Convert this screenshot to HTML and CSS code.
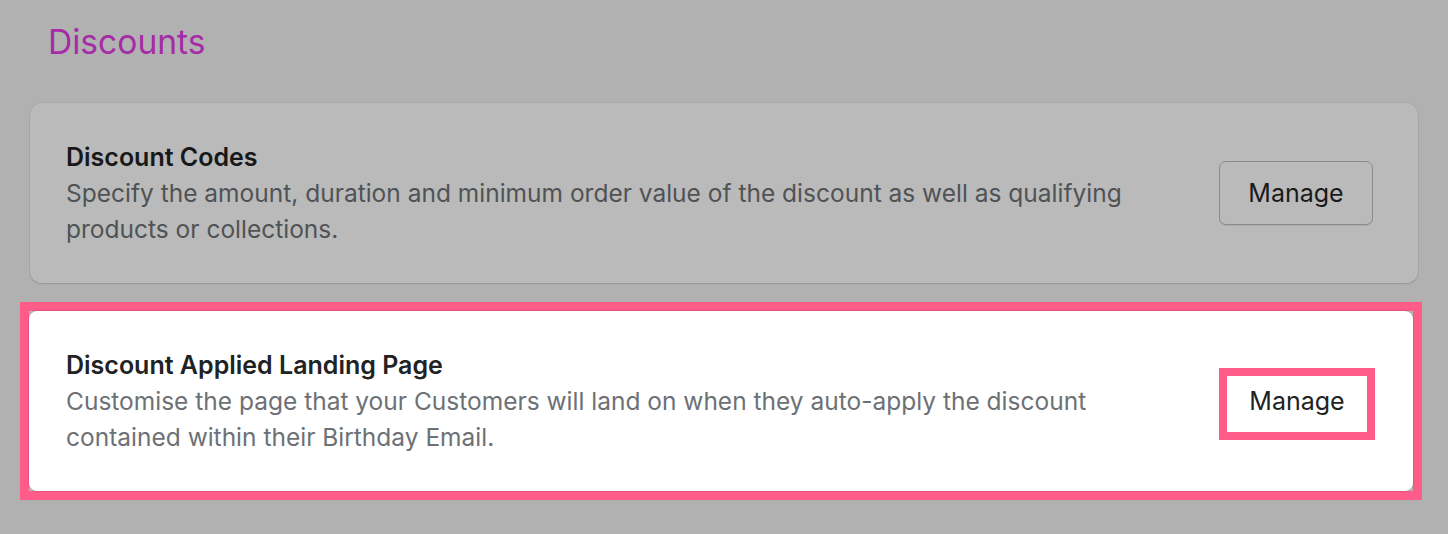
FILE: index.html
```html
<!DOCTYPE html>
<html lang="en">
<head>
<meta charset="utf-8">
<title>Discounts</title>
<link rel="stylesheet" href="styles.css">
</head>
<body>
<main class="page">
  <h1 class="page-title">Discounts</h1>
  <div class="cards">
    <section class="card card-dim">
      <div class="card-text">
        <h2 class="card-title">Discount Codes</h2>
        <p class="card-desc">Specify the amount, duration and minimum order value of the discount as well as qualifying products or collections.</p>
      </div>
      <button class="btn btn-dim" type="button">Manage</button>
    </section>
    <div class="highlight">
      <section class="card card-lit">
        <div class="card-text">
          <h2 class="card-title">Discount Applied Landing Page</h2>
          <p class="card-desc">Customise the page that your Customers will land on when they auto-apply the discount contained within their Birthday Email.</p>
        </div>
        <div class="btn-wrap">
          <button class="btn btn-lit" type="button">Manage</button>
        </div>
      </section>
    </div>
  </div>
</main>
</body>
</html>
```

FILE: styles.css
```css
* { box-sizing: border-box; }

html, body {
  margin: 0;
  padding: 0;
  background: #b1b1b1;
  font-family: Inter, "Noto Sans", "Liberation Sans", sans-serif;
}

body {
  min-height: 534px;
}

.page {
  padding: 0 30px 35px 30px;
  min-height: 534px;
}

.page-title {
  margin: 0;
  padding: 20px 0 0 18px;
  height: 103px;
  font-size: 33.6px;
  line-height: 44px;
  font-weight: 400;
  color: #a52ba7;
}

.cards {
  display: flex;
  flex-direction: column;
  gap: 28px;
}

.card {
  display: flex;
  align-items: center;
  justify-content: space-between;
  border-radius: 12px;
  padding: 36px 45px 36px 36px;
  min-height: 179px;
}

.card-dim {
  background: #bababa;
  box-shadow: 0 1px 2px rgba(0, 0, 0, 0.12), 0 0 0 1px rgba(0, 0, 0, 0.03);
}

.highlight {
  border: 9px solid #ff5c8a;
  margin: -9px -4px 0 -10px;
  background: #b9b9b9;
}

.card-lit {
  background: #ffffff;
  border-radius: 8px;
  min-height: 180px;
  padding-left: 37px;
  padding-right: 39px;
  box-shadow: 0 0 2px rgba(0, 0, 0, 0.35);
}

.card-text {
  max-width: 1080px;
}

.card-title {
  margin: 0;
  font-size: 25px;
  line-height: 36px;
  font-weight: 600;
}

.card-desc {
  margin: 0;
  font-size: 24.5px;
  line-height: 36px;
  font-weight: 400;
}

.card-dim .card-title { color: #171819; }
.card-dim .card-desc { color: #505355; }
.card-lit .card-title { color: #202223; }
.card-lit .card-desc { color: #6d7175; }

.btn {
  flex: none;
  width: 154px;
  height: 64px;
  border-radius: 7px;
  font-family: inherit;
  font-size: 25px;
  font-weight: 400;
  color: #1a1a1a;
  cursor: pointer;
}

.btn-dim {
  background: #bababa;
  border: 1px solid #8a8a8a;
  box-shadow: 0 1px 0 rgba(0, 0, 0, 0.08);
}

.btn-wrap {
  position: relative;
  flex: none;
}

.btn-lit {
  background: #ffffff;
  border: 1px solid #c9cccf;
  color: #202223;
  display: block;
}

.btn-wrap::after {
  content: "";
  position: absolute;
  top: -1px;
  left: -1px;
  right: -1px;
  bottom: -7px;
  border: 8px solid #ff5c8a;
  pointer-events: none;
}
```
